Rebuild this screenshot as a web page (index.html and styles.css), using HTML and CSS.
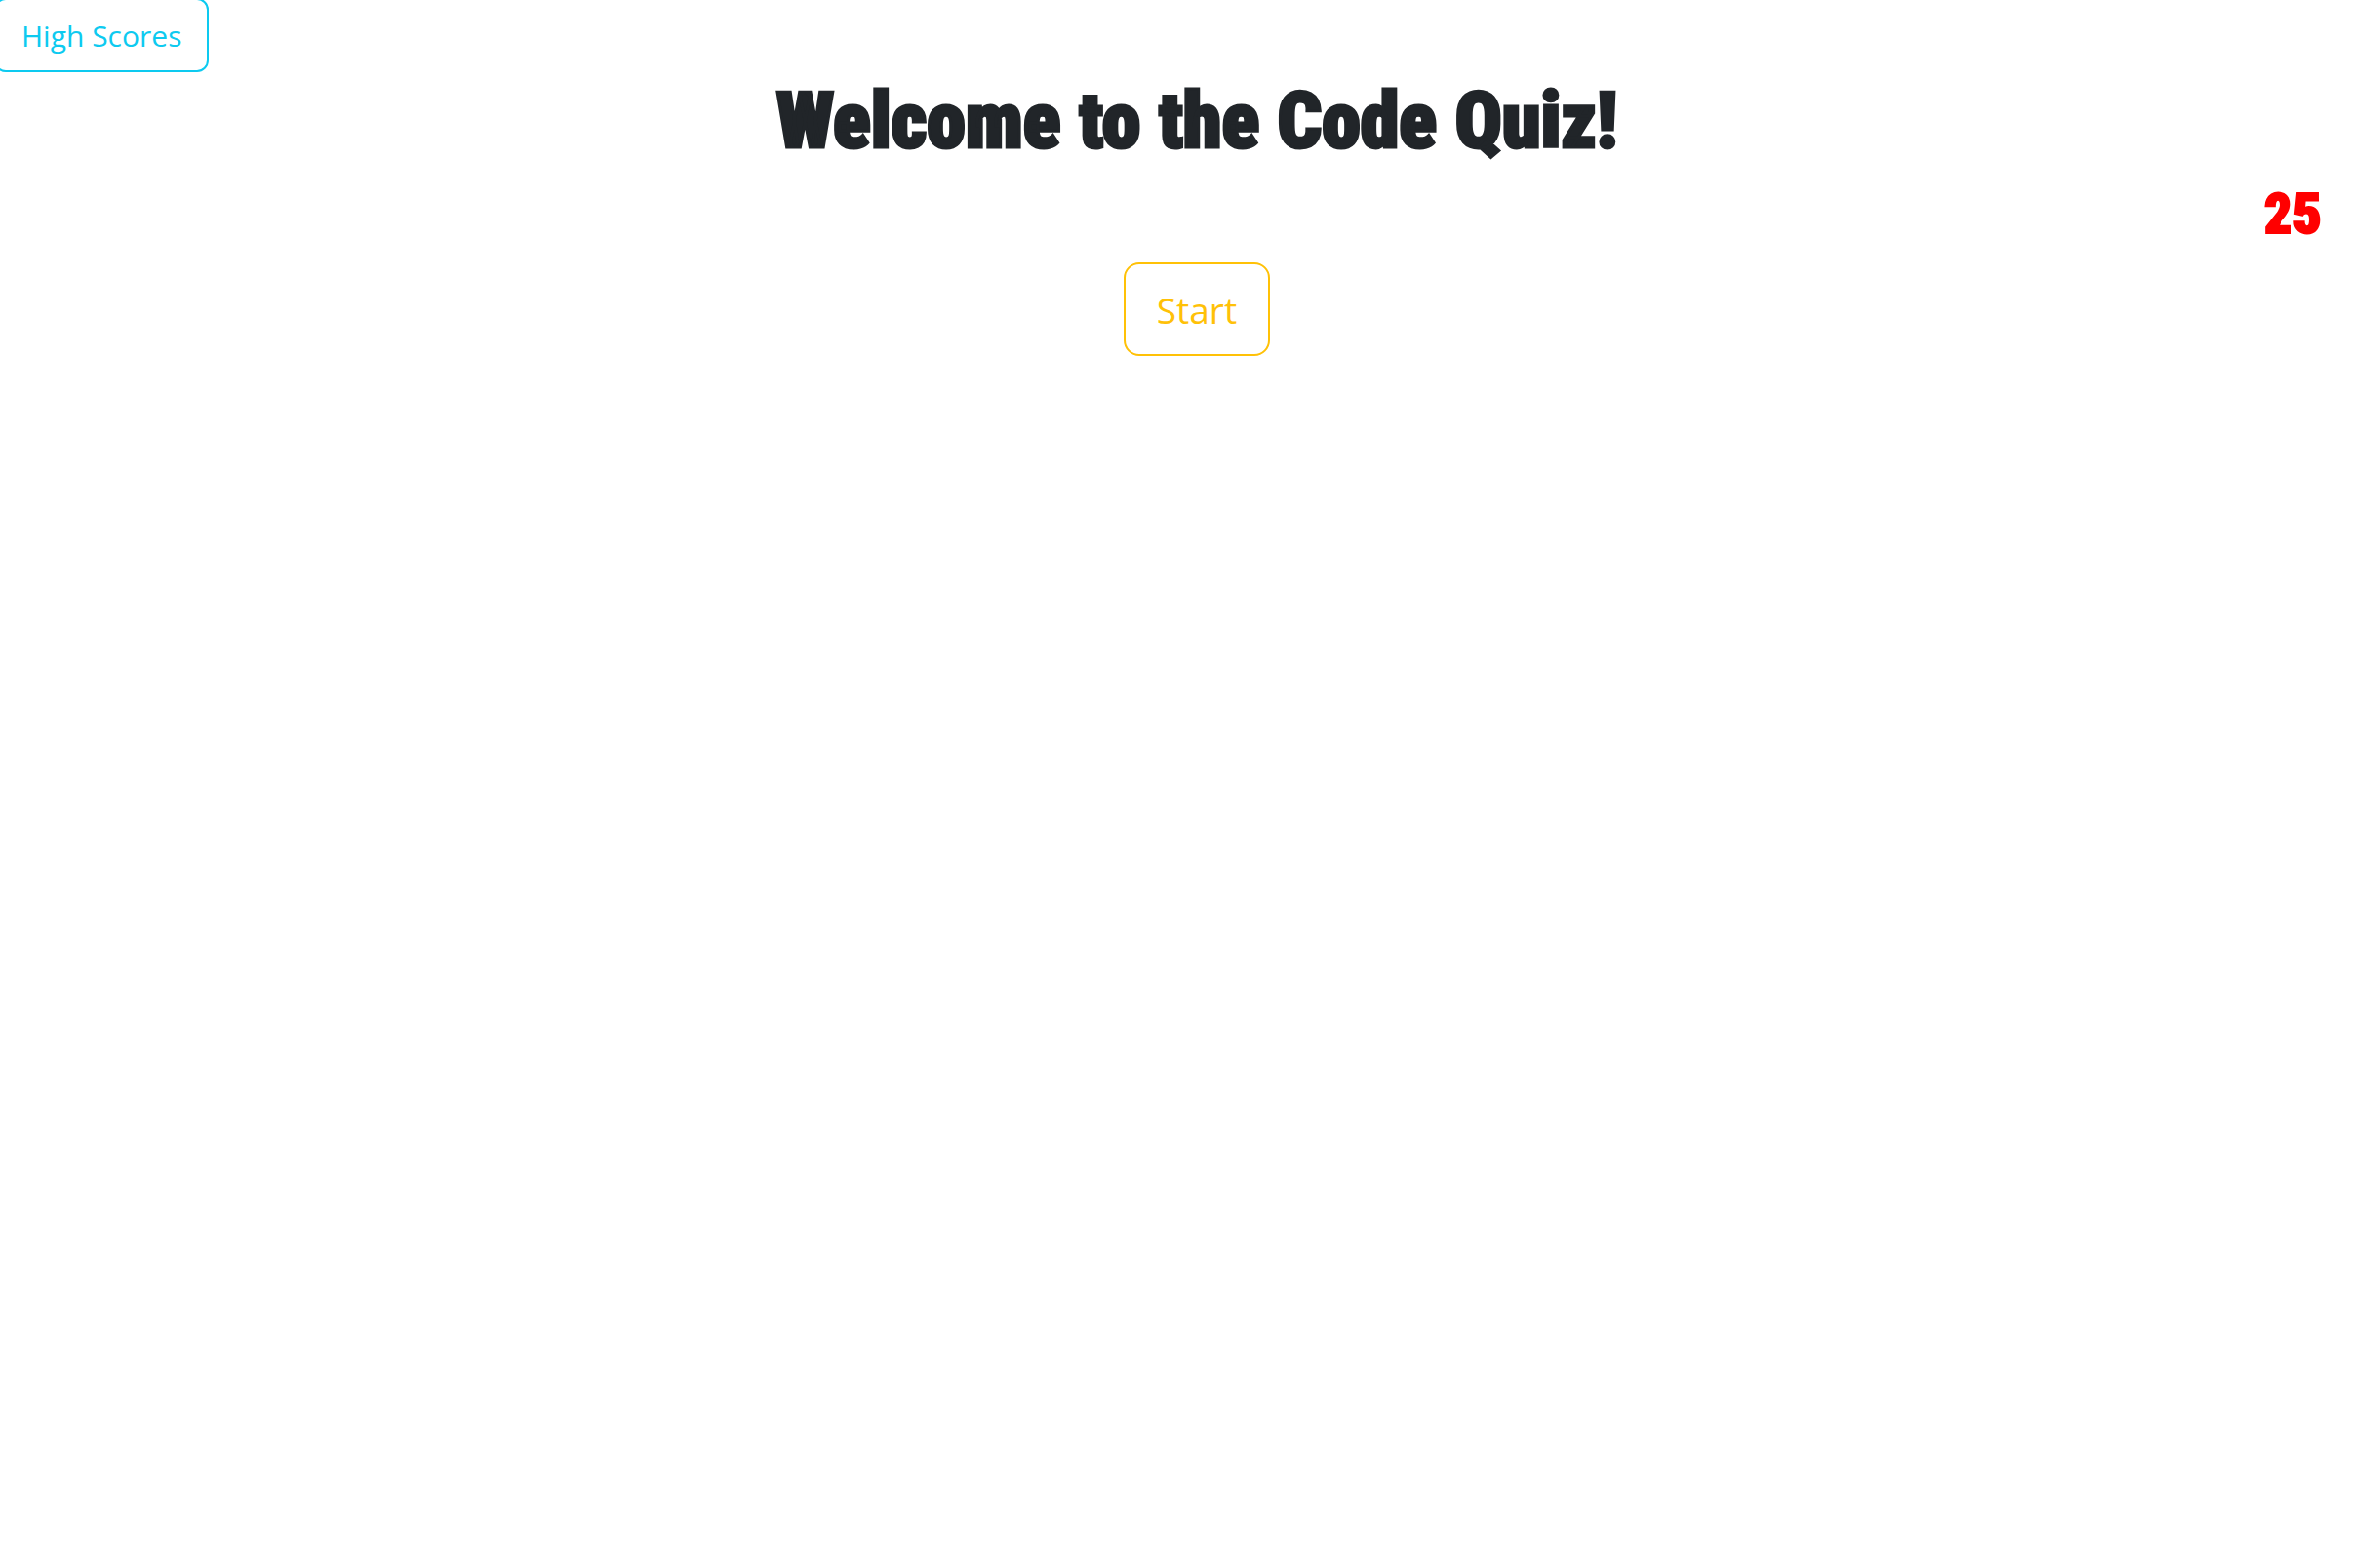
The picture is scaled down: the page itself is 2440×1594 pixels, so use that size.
FILE: index.html
```html
<!DOCTYPE html>
<html lang="en">
<head>
<meta charset="utf-8">
<title>Code Quiz</title>
<link rel="stylesheet" href="styles.css">
</head>
<body>
<header class="topbar">
<button class="btn btn-scores" type="button">High Scores</button>
</header>
<main class="quiz">
<h1 class="title">Welcome to the Code Quiz!</h1>
<p class="timer">25</p>
<button class="btn btn-start" type="button">Start</button>
</main>
</body>
</html>
```
FILE: styles.css
```css
* {
  box-sizing: border-box;
}

body {
  margin: 0;
  overflow-x: hidden;
  background: #fff;
  color: #212529;
  font-family: "Segoe UI", "Open Sans", sans-serif;
}

.btn {
  border: 2px solid currentColor;
  background: transparent;
  font-family: inherit;
  line-height: 48px;
  cursor: pointer;
}

.topbar {
  display: flex;
  margin: -2px 0 0 -6px;
}

.btn-scores {
  padding: 13px 26px 11px;
  border-radius: 12px;
  color: #0dcaf0;
  font-size: 30px;
}

.quiz {
  display: flex;
  flex-direction: column;
  align-items: center;
  padding-left: 14px;
}

.title,
.timer {
  margin: 0;
  font-family: Impact, "Liberation Sans Narrow", "Roboto Condensed", "Liberation Sans", sans-serif;
  font-weight: 900;
  white-space: nowrap;
}

.title {
  font-size: 80px;
  line-height: 100px;
  -webkit-text-stroke: 3px currentColor;
}

.timer {
  align-self: flex-end;
  margin-bottom: 5px;
  padding-right: 60px;
  color: #f00;
  font-size: 58px;
  line-height: 90px;
  -webkit-text-stroke: 2px currentColor;
}

.btn-start {
  padding: 23px 32px 21px;
  border-radius: 16px;
  color: #ffc107;
  font-size: 37px;
}
```
